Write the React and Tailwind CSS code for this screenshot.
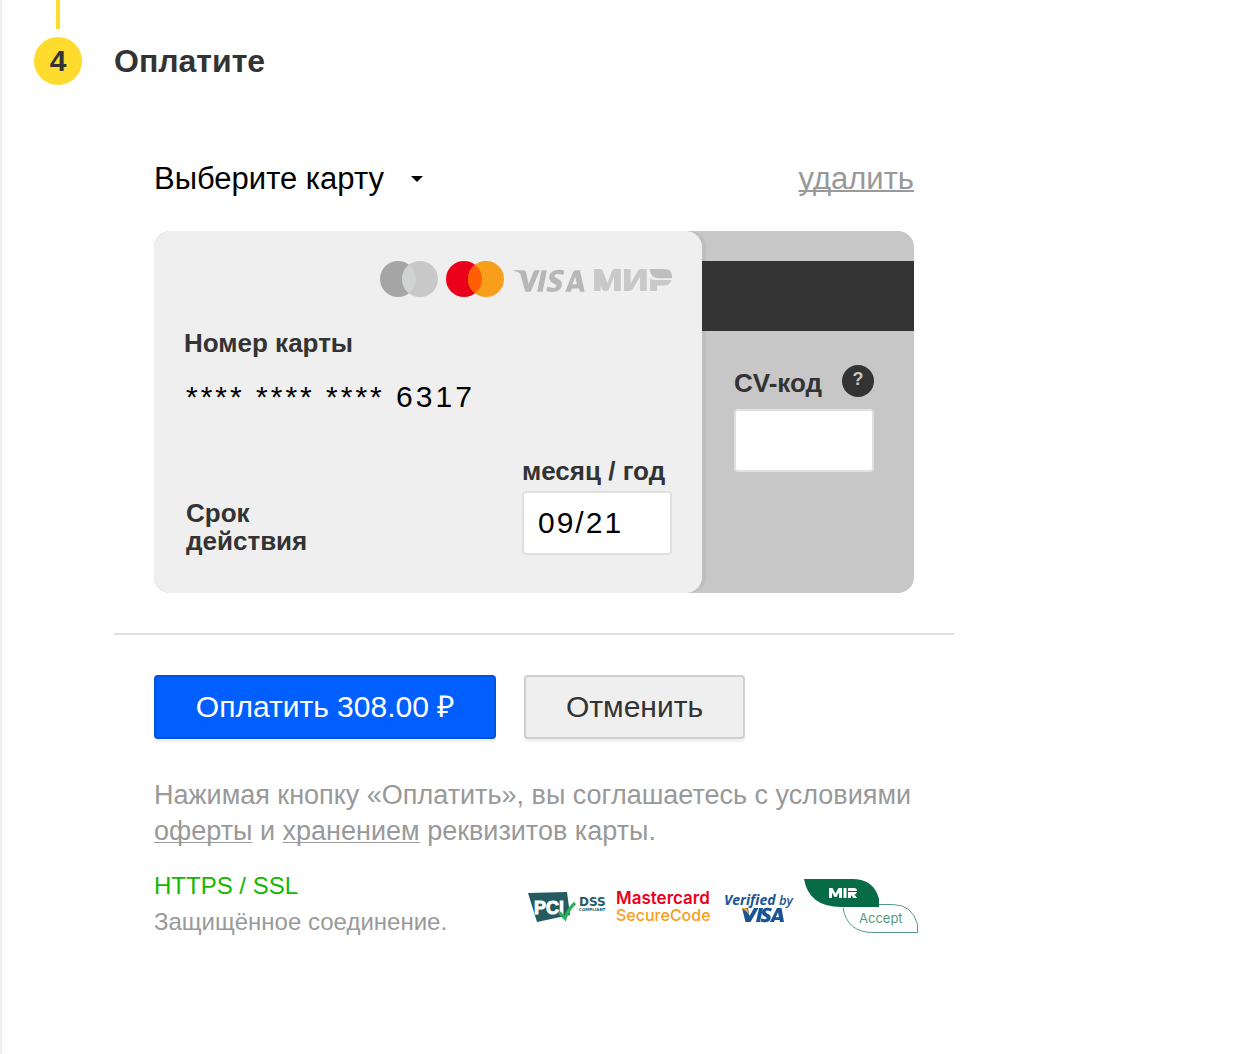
import React from "react";

const StepMarker = ({ number }) => {
  return (
    <div className="flex flex-col items-center gap-2 w-12 shrink-0">
      <div className="w-1 h-[29px] bg-[#ffdb2d]"></div>
      <div className="flex items-center justify-center w-12 h-12 rounded-full bg-[#ffdb2d] text-[30px] leading-8 font-bold">
        {number}
      </div>
    </div>
  );
};

const PaymentSystems = () => {
  return (
    <svg className="w-[292px] h-9" viewBox="0 0 292 36" role="img" aria-label="Maestro, Mastercard, Visa, Мир">
      <circle cx="18" cy="18" r="18" fill="#a5a5a5" />
      <circle cx="40" cy="18" r="18" fill="#c8c8c8" />
      <path d="M29 3.75a18 18 0 0 1 0 28.5a18 18 0 0 1 0-28.5z" fill="#d0d3d2" />
      <circle cx="84" cy="18" r="18" fill="#eb001b" />
      <circle cx="106" cy="18" r="18" fill="#f79e1b" />
      <path d="M95 3.75a18 18 0 0 1 0 28.500a18 18 0 0 1 0-28.500z" fill="#ff5f00" />
      {/* visa */}
      <g fill="#b7b7b7">
        <path d="M133.500 9.200h9.500q2.500 0 3.100 2.200l2.400 11.600 5.800-13.800h5.600l-9.200 21.500h-5.500l-4.600-17q-.4-1.300-2-2.200-2.200-1.200-5.100-1.700z" />
        <path d="M161.500 9.200h5.400l-4.300 21.500h-5.400z" />
        <path d="M184.300 9.700l-.9 4.400q-8.700-2.600-8.900.8c0 2.200 7.400 2.700 7.400 8.200 0 7.600-8.300 9.200-15.600 7l.9-4.600q8.800 3.100 9.300-.5c.2-2.500-7.300-2.600-7.300-8.300 0-7.200 8.700-9.200 15.100-7z" />
        <path d="M194.800 9.200h5.200l4.600 21.500h-4.700l-.7-3.200h-7.100l-1.300 3.200h-5.700l8.200-19.600q.6-1.400 1.500-1.900zm.5 6.600l-3 7.500h4.500z" fillRule="evenodd" />
      </g>
      {/* mir */}
      <g fill="#c8c8c8">
        <path d="M214 8h6.200q2 0 2.700 2l4.600 12L232 10q.8-2 2.700-2h6.100v22H234V15.500L229 28q-.8 2-2.500 2h-2.200q-1.500 0-2.300-2l-1.500-3.700V30H214z" />
        <path d="M244 8h6.600v14.500l7.300-12.400q1.200-2.100 3.200-2.100h5.600v22h-6.600V15.500l-7.300 12.400q-1.200 2.100-3.200 2.100H244z" />
        <path d="M270 17.500q2.500 1.500 5.500 1.500h16.200q-1.700 5.500-7.700 5.500h-7V30h-7z" />
        <path d="M269.500 8h14.800q7.700 0 7.700 7.200v2H278q-7.200 0-8.500-9.200z" fill="#bebebe" />
      </g>
    </svg>
  );
};

const PciLogo = () => {
  return (
    <svg className="w-[78px] h-8" viewBox="0 0 78 32" role="img" aria-label="PCI DSS Compliant">
      <path d="M0 3l39-1 3 23-33 7z" fill="#255b5f" />
      <text x="6" y="24" fill="#fff" stroke="#fff" strokeWidth="1" fontSize="18" fontWeight="bold" fontFamily="Liberation Sans, sans-serif">PCi</text>
      <path d="M31.500 22.500l5.500 6q3-9 10-15.500" fill="none" stroke="#23b557" strokeWidth="3.200" />
      <text x="51" y="16" fill="#255b5f" fontSize="12" fontWeight="bold" fontFamily="DejaVu Sans, sans-serif">DSS</text>
      <text x="51" y="21" fill="#255b5f" fontSize="4" fontWeight="bold" fontFamily="DejaVu Sans, sans-serif">COMPLIANT</text>
    </svg>
  );
};

const SecureCodeLogo = () => {
  return (
    <svg className="w-[98px] h-9" viewBox="0 0 98 36" role="img" aria-label="Mastercard SecureCode">
      <g fontFamily="Inter, sans-serif">
        <text x="0" y="16" fill="#eb001b" fontSize="17" fontWeight="600">Mastercard</text>
        <text x="0" y="33" fill="#f79e1b" fontSize="16" fontWeight="500">SecureCode</text>
      </g>
    </svg>
  );
};

const VerifiedByVisaLogo = () => {
  return (
    <svg className="w-[70px] h-9" viewBox="0 0 70 36" role="img" aria-label="Verified by Visa">
      <g fill="#1a5493" fontStyle="italic" fontFamily="Open Sans, sans-serif">
        <text x="0" y="17" fontSize="14" fontWeight="bold">Verified</text>
        <text x="55" y="17" fontSize="13" fontWeight="600">by</text>
      </g>
      <g fill="#1a5493">
        <path d="M18 20h6l1.500 8 4.500-8h4.500l-8 14h-5z" />
        <path d="M35 20h4l-3 14h-4z" />
        <path d="M48 20.500l-1 3q-5-2-5.400.3c0 1.700 5.100 2.200 5.100 5.700 0 5-6.200 5.500-10.200 4l.8-3.200q5 2 5.400-.2c.1-1.700-4.700-1.700-4.700-5.700 0-4.800 5.800-5.200 10-3.900z" />
        <path d="M53 20h4.500l2.500 14h-4l-.4-2h-4.800l-.9 2h-4zm1 4.300l-2.100 5h3z" fillRule="evenodd" />
      </g>
      <path d="M16.500 20h5q2 0 2.500 2l1 5q-3-5-8.500-7z" fill="#f2a233" />
    </svg>
  );
};

const MirAcceptLogo = () => {
  return (
    <svg className="w-[114px] h-[54px]" viewBox="0 0 114 54" role="img" aria-label="MIR Accept">
      <path d="M0 0h48q22 0 27 20v8H37Q5 28 0 0z" fill="#066b46" />
      <path d="M39 28.500q4 25 30 25h44.500v-8q-5-20-25-20H75" fill="none" stroke="#559a80" />
      <g fill="#fff">
        <path d="M25 9h3.500l3 5.500 3-5.500H38v10h-3v-5.500L32.500 18h-2L28 13.500V19h-3z" />
        <path d="M39.500 9h3v10h-3z" />
        <path d="M44 9h6q3 0 3 3H44zM44 13h9q-.5 2-2.500 2.500L53 19h-3.500L47 16v3h-3z" />
      </g>
      <text x="55" y="44" fill="#559a80" fontSize="13" fontWeight="400" fontFamily="Inter, sans-serif">Accept</text>
    </svg>
  );
};

const CardFront = () => {
  return (
    <div className="w-[548px] shrink-0 flex flex-col rounded-2xl bg-[#efefef] px-[30px] pt-[30px] shadow-[4px_0_0_#bebebe]">
      <div className="flex justify-end">
        <PaymentSystems />
      </div>
      <label htmlFor="card-number" className="mt-8 text-[26px] leading-7 font-bold">
        Номер карты
      </label>
      <input
        id="card-number"
        readOnly
        value="**** **** **** 6317"
        className="mt-5 h-10 w-80 bg-transparent px-0.5 text-[30px] leading-10 tracking-[3px] text-black outline-none"
      />
      <div className="mt-[38px] flex items-end justify-between">
        <label htmlFor="card-expiry" className="w-40 pl-0.5 text-[26px] leading-7 font-bold">
          Срок действия
        </label>
        <div className="flex flex-col w-[150px]">
          <label htmlFor="card-expiry" className="text-[26px] leading-8 font-bold whitespace-nowrap">
            месяц / год
          </label>
          <input
            id="card-expiry"
            defaultValue="09/21"
            className="mt-1 h-16 rounded border-2 border-[#e0e0e0] bg-white px-3.5 text-[30px] tracking-[2px] text-black outline-none"
          />
        </div>
      </div>
    </div>
  );
};

const CardBack = () => {
  return (
    <div className="grow pt-[30px]">
      <div className="relative h-[70px] bg-[#333333]"></div>
      <div className="flex flex-col px-8 pt-[34px]">
        <div className="flex items-center justify-between w-[140px]">
          <label htmlFor="card-cvc" className="pt-1 text-[26px] leading-7 font-bold whitespace-nowrap">
            CV-код
          </label>
          <button
            type="button"
            aria-label="Что такое CV-код?"
            className="w-8 h-8 rounded-full bg-[#333333] pb-1 text-lg leading-7 font-bold text-[#c7c7c7]"
          >
            ?
          </button>
        </div>
        <input
          id="card-cvc"
          type="password"
          className="mt-3 h-[63px] w-[140px] rounded border-2 border-[#e0e0e0] bg-white px-3.5 text-[30px] outline-none"
        />
      </div>
    </div>
  );
};

const App = () => {
  return (
    <main className="min-h-screen flex gap-8 border-l-2 border-[#efefef] bg-white pl-8 text-[#333333] font-['Liberation_Sans',Arial,sans-serif]">
      <StepMarker number="4" />
      <form className="w-full max-w-[840px] pt-[41px]">
        <h2 className="text-[32px] leading-10 font-bold">Оплатите</h2>

        <section className="px-10 pt-[78px] pb-10">
          <div className="flex items-center justify-between text-[31px] leading-10">
            <div className="relative">
              <select
                aria-label="Выберите карту"
                className="appearance-none h-10 w-[272px] bg-transparent text-black outline-none"
              >
                <option>Выберите карту</option>
              </select>
              <svg className="absolute right-0.5 top-4 w-3.5 h-2 pointer-events-none" viewBox="0 0 14 8">
                <path d="M1 1h12L7 7z" fill="#000" />
              </svg>
            </div>
            <a
              href="#delete"
              className="text-[#999999] underline decoration-2 underline-offset-1 [text-decoration-skip-ink:none]"
            >
              удалить
            </a>
          </div>

          <div className="mt-8 flex min-h-[362px] overflow-hidden rounded-2xl bg-[#c7c7c7]">
            <CardFront />
            <CardBack />
          </div>
        </section>

        <hr className="border-t-2 border-[#e0e0e0]" />

        <section className="px-10 pt-10">
          <div className="flex gap-7 text-[30px]">
            <button
              type="submit"
              className="h-16 w-[342px] rounded border-2 border-[#0052d9] bg-[#005ffe] pb-0.5 text-white shadow-[0_3px_0_#f2f2f2]"
            >
              Оплатить 308.00 ₽
            </button>
            <button
              type="button"
              className="h-16 w-[221px] rounded border-2 border-[#d0d0d0] bg-[#efefef] pb-0.5 shadow-[0_3px_0_#f2f2f2]"
            >
              Отменить
            </button>
          </div>

          <p className="mt-[38px] text-[27px] leading-9 text-[#999999]">
            Нажимая кнопку «Оплатить», вы соглашаетесь с условиями{" "}
            <a href="#offer" className="underline decoration-1 underline-offset-2 [text-decoration-skip-ink:none]">
              оферты
            </a>{" "}
            и{" "}
            <a href="#storage" className="underline decoration-1 underline-offset-2 [text-decoration-skip-ink:none]">
              хранением
            </a>{" "}
            реквизитов карты.
          </p>

          <div className="mt-[19px] flex items-start justify-between">
            <div className="text-2xl leading-9">
              <p className="text-[#12b800]">HTTPS / SSL</p>
              <p className="text-[#999999]">Защищённое соединение.</p>
            </div>
            <div className="flex items-center gap-2.5 pt-[11px] -mr-1">
              <PciLogo />
              <SecureCodeLogo />
              <VerifiedByVisaLogo />
              <MirAcceptLogo />
            </div>
          </div>
        </section>
      </form>
    </main>
  );
};

export default App;
